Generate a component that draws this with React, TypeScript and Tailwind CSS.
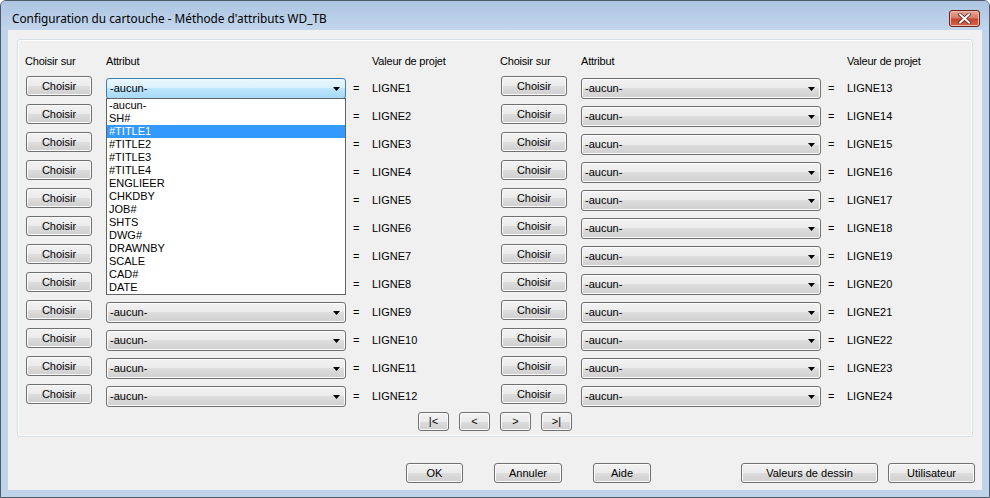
import React from 'react'

const ATTRS = [
  '-aucun-', 'SH#', '#TITLE1', '#TITLE2', '#TITLE3', '#TITLE4', 'ENGLIEER', 'CHKDBY',
  'JOB#', 'SHTS', 'DWG#', 'DRAWNBY', 'SCALE', 'CAD#', 'DATE',
]

const BTN =
  'flex items-center justify-center rounded-[3px] border border-[#707070] bg-[linear-gradient(to_bottom,#f2f2f2_0%,#ebebeb_50%,#dddddd_50%,#cfcfcf_100%)] shadow-[inset_0_0_0_1px_#fbfbfb] text-[11px] leading-none text-black'

function Combo({ open }: { open?: boolean }) {
  return (
    <div
      className={
        open
          ? 'mt-[2px] flex h-[21px] w-[240px] items-center justify-between rounded-[3px] border border-[#3c7fb1] bg-[linear-gradient(to_bottom,#eaf6fd_0%,#d9f0fc_50%,#bee6fd_50%,#a7d9f5_100%)] pl-[3px] pr-[5px]'
          : 'mt-[2px] flex h-[21px] w-[240px] items-center justify-between rounded-[3px] border border-[#707070] bg-[linear-gradient(to_bottom,#f2f2f2_0%,#ebebeb_50%,#dddddd_50%,#cfcfcf_100%)] shadow-[inset_0_0_0_1px_#fbfbfb] pl-[3px] pr-[5px]'
      }
    >
      <span className="text-[11px] leading-none">-aucun-</span>
      <svg width="7" height="4" viewBox="0 0 7 4">
        <path d="M0 0h7L3.5 4z" fill="#000" />
      </svg>
    </div>
  )
}

// covered = la ligne est cachée sous la liste déroulante ouverte
function Row({ n, open, covered }: { n: number; open?: boolean; covered?: boolean }) {
  return (
    <div className="flex h-[28px] items-start">
      <button className={`${BTN} h-[20px] w-[66px] shrink-0`}>Choisir</button>
      <div className="ml-[14px] w-[240px] shrink-0">{!covered && <Combo open={open} />}</div>
      <span className="ml-[7px] mt-[6px] w-[19px] shrink-0 text-[11px] leading-[13px]">=</span>
      <span className="mt-[6px] text-[11px] leading-[13px]">LIGNE{n}</span>
    </div>
  )
}

function Column({ start, first }: { start: number; first?: boolean }) {
  return (
    <div className="flex w-[475px] shrink-0 flex-col">
      <div className="flex h-[13px] text-[11px] leading-[13px] tracking-[-0.2px]">
        <span className="-ml-px w-[81px]">Choisir sur</span>
        <span className="w-[266px]">Attribut</span>
        <span>Valeur de projet</span>
      </div>
      <div className="mt-[8px] flex flex-col">
        {Array.from({ length: 12 }, (_, i) => (
          <Row key={i} n={start + i} open={first && i === 0} covered={first && i >= 1 && i <= 7} />
        ))}
      </div>
    </div>
  )
}

export default function App() {
  return (
    <div className="flex h-[498px] w-[990px] flex-col overflow-hidden rounded-t-[6px] border border-[#4e5a68] bg-[#bfd4eb] font-['Liberation_Sans',Arial,sans-serif] text-black">
      {/* barre de titre */}
      <div className="flex h-[29px] items-start bg-[linear-gradient(to_bottom,#adc5e1,#c2d6ec)]">
        <span className="ml-[11px] mt-[9px] font-['Noto_Sans',sans-serif] text-[11.8px] leading-[16px] text-black">
          Configuration du cartouche - Méthode d'attributs WD_TB
        </span>
        <div className="ml-auto mr-[9px] mt-[9px] flex h-[17px] w-[31px] items-center justify-center rounded-[3px] border border-[#6b2418] bg-[linear-gradient(to_bottom,#e9a99a_0%,#d97c68_45%,#c6452e_55%,#d6654a_100%)] shadow-[inset_0_0_0_1px_#f0b8aa]">
          <svg width="13" height="11" viewBox="0 0 13 11">
            <path
              d="M2 1.5l9 8M11 1.5l-9 8"
              stroke="#5a2a22"
              strokeWidth="3.6"
              strokeLinecap="square"
            />
            <path d="M2 1.5l9 8M11 1.5l-9 8" stroke="#fff" strokeWidth="2" strokeLinecap="square" />
          </svg>
        </div>
      </div>

      {/* zone client */}
      <div className="mx-[7px] flex h-[460px] w-[974px] flex-col bg-[#f0f0f0]">
        <div className="relative ml-[9px] mt-[9px] flex h-[398px] w-[956px] flex-col rounded-[3px] border border-[#d5dfe5] shadow-[inset_0_0_0_1px_#ffffff]">
          <div className="flex pl-[8px] pt-[15px]">
            <Column start={1} first />
            <Column start={13} />
          </div>
          <div className="flex justify-center gap-[10px]">
            {['|<', '<', '>', '>|'].map((g) => (
              <button key={g} className={`${BTN} h-[19px] w-[31px] text-[#333]`}>
                {g}
              </button>
            ))}
          </div>

          {/* liste déroulante ouverte */}
          <div className="absolute left-[88px] top-[58px] w-[240px] border border-[#646464] bg-white">
            {ATTRS.map((a) => (
              <div
                key={a}
                className={
                  a === '#TITLE1'
                    ? 'h-[13px] bg-[#3399ff] pl-[2px] text-[11px] leading-[13px] text-white'
                    : 'h-[13px] pl-[2px] text-[11px] leading-[13px]'
                }
              >
                {a}
              </div>
            ))}
          </div>
        </div>

        <div className="mt-[26px] flex pl-[398px]">
          <button className={`${BTN} h-[20px] w-[57px] border-[#3c7fb1] shadow-[inset_0_0_0_1px_#a5e3fb]`}>OK</button>
          <button className={`${BTN} ml-[31px] h-[20px] w-[68px]`}>Annuler</button>
          <button className={`${BTN} ml-[31px] h-[20px] w-[58px]`}>Aide</button>
          <button className={`${BTN} ml-[90px] h-[20px] w-[137px]`}>Valeurs de dessin</button>
          <button className={`${BTN} ml-[10px] h-[20px] w-[87px]`}>Utilisateur</button>
        </div>
      </div>
    </div>
  )
}
